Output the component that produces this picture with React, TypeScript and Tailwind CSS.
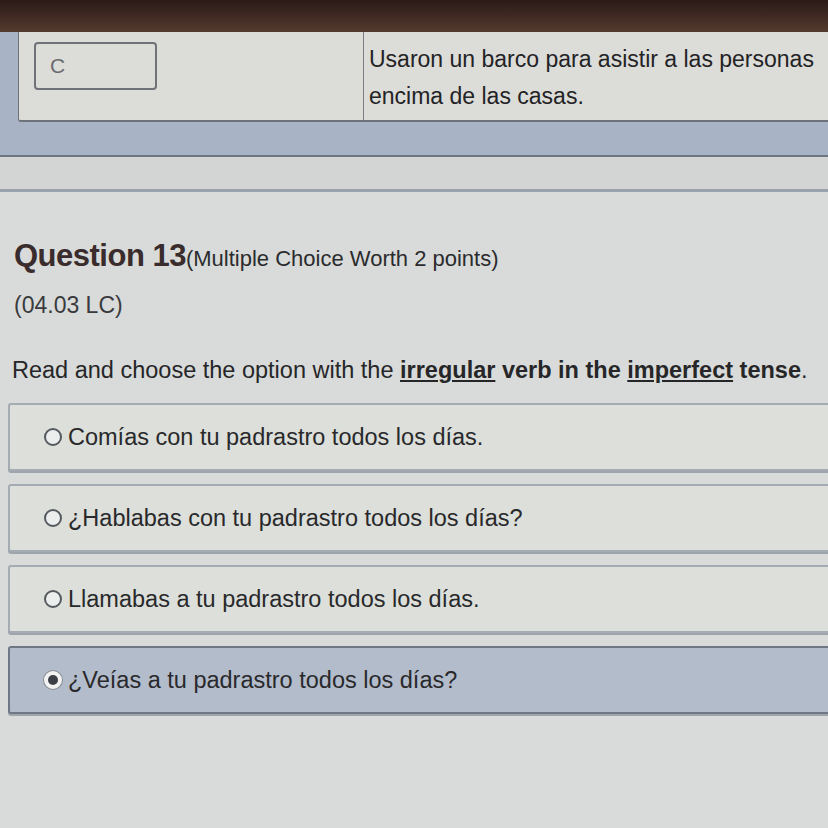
import React from 'react';

const options = [
  { text: 'Comías con tu padrastro todos los días.', selected: false },
  { text: '¿Hablabas con tu padrastro todos los días?', selected: false },
  { text: 'Llamabas a tu padrastro todos los días.', selected: false },
  { text: '¿Veías a tu padrastro todos los días?', selected: true },
];

const Radio = ({ checked }: { checked: boolean }) => (
  <span
    className={`flex h-[18px] w-[18px] shrink-0 items-center justify-center rounded-full border-2 ${
      checked ? 'border-[#f2f2f2] bg-[#f2f2f2] ring-1 ring-[#8a8f96]' : 'border-[#55595e] bg-[#eceeee]'
    }`}
  >
    {checked && <span className="h-[10px] w-[10px] rounded-full bg-[#3c3f45]" />}
  </span>
);

const App = () => {
  return (
    <div
      className="flex h-[828px] w-[828px] flex-col overflow-hidden bg-[#d8dbd9] text-[#2a2a2c]"
      style={{ fontFamily: '"Liberation Sans", Arial, sans-serif' }}
    >
      {/* monitor bezel */}
      <div className="h-[32px] shrink-0 bg-gradient-to-b from-[#2a1b17] to-[#553a2f]" />

      {/* previous question table, cut off */}
      <div className="h-[123px] shrink-0 bg-[#a8b4c5] pl-[18px]">
        <div className="flex h-[90px] rounded-bl-[3px] border-b-2 border-l border-[#6e737a] bg-[#dcdcd9]">
          <div className="w-[344px] shrink-0 pl-[15px] pt-[10px]">
            <div className="flex h-[48px] w-[123px] items-center rounded-[4px] border-2 border-[#6f7276] pl-[14px] text-[21px] text-[#6a6b6d]">
              C
            </div>
          </div>
          <div className="flex-1 border-l border-[#7a7d82] pl-[5px] pt-[9px] text-[23px] leading-[37px] text-[#232325]">
            <div className="whitespace-nowrap">Usaron un barco para asistir a las personas</div>
            <div>encima de las casas.</div>
          </div>
        </div>
      </div>

      <div className="h-[34px] shrink-0 border-t-2 border-[#6d7580] bg-[#d3d5d5]" />
      <div className="h-[3px] shrink-0 bg-[#98a2ae]" />

      {/* question */}
      <div className="flex flex-1 flex-col pt-[41px]">
        <div className="flex items-baseline pl-[14px]">
          <span className="text-[31px] font-bold tracking-[-0.5px] text-[#3a2c2c]">Question 13</span>
          <span className="text-[22px] text-[#2b2b2e]">(Multiple Choice Worth 2 points)</span>
        </div>
        <div className="mt-[8px] pl-[14px] text-[23px] text-[#3a3a3e]">(04.03 LC)</div>

        <p className="mt-[31px] whitespace-nowrap pl-[12px] text-[23.5px] text-[#262628]">
          Read and choose the option with the{' '}
          <b className="underline decoration-2 underline-offset-2">irregular</b>
          <b> verb in the </b>
          <b className="underline decoration-2 underline-offset-2">imperfect</b>
          <b> tense</b>.
        </p>

        <div className="mt-[15px] flex flex-col gap-[13px] pl-[8px]">
          {options.map((o) => (
            <div
              key={o.text}
              className={`-mr-[6px] flex h-[68px] items-center gap-[6px] rounded-[3px] border-2 pl-[34px] shadow-[0_2px_0_#9ea5ad] ${
                o.selected ? 'border-[#6f7784] bg-[#b3bccb]' : 'border-[#a5abb2] bg-[#dcdfda]'
              }`}
            >
              <Radio checked={o.selected} />
              <span className="whitespace-nowrap text-[23.5px] text-[#29292b]">{o.text}</span>
            </div>
          ))}
        </div>
      </div>
    </div>
  );
};

export default App;
